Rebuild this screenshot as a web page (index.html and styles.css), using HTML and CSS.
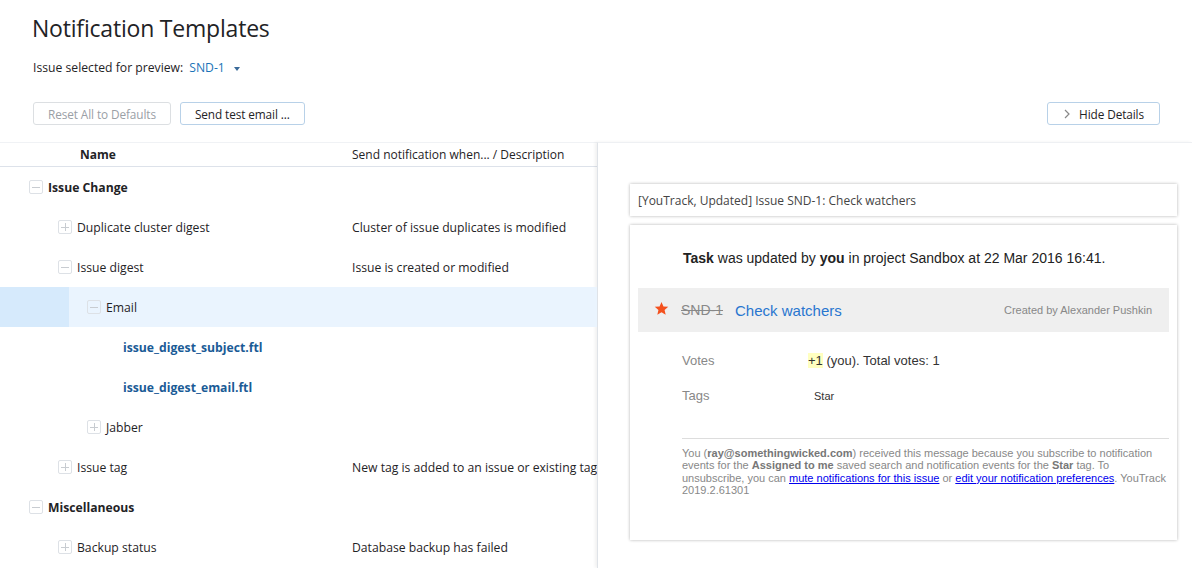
FILE: index.html
```html
<!DOCTYPE html>
<html>
<head>
<meta charset="utf-8">
<link rel="stylesheet" href="styles.css">
</head>
<body>
<div class="page">
  <h1 class="title">Notification Templates</h1>
  <div class="preview">Issue selected for preview: <span class="issue-link">SND-1</span><span class="caret"></span></div>
  <div class="toolbar">
    <div class="btns">
      <button class="btn disabled">Reset All to Defaults</button>
      <button class="btn">Send test email ...</button>
    </div>
    <button class="btn hide-btn"><svg width="8" height="10" viewBox="0 0 8 10"><path d="M2 1l4 4-4 4" fill="none" stroke="#888" stroke-width="1.2"/></svg>Hide Details</button>
  </div>
  <div class="main">
    <div class="tree">
      <div class="thead">
        <div class="col-name">Name</div>
        <div class="col-desc">Send notification when... / Description</div>
      </div>
      <div class="row l0"><span class="tg minus"></span><span class="name bold">Issue Change</span><span class="desc"></span></div>
      <div class="row l1"><span class="tg plus"></span><span class="name">Duplicate cluster digest</span><span class="desc">Cluster of issue duplicates is modified</span></div>
      <div class="row l1"><span class="tg minus"></span><span class="name">Issue digest</span><span class="desc">Issue is created or modified</span></div>
      <div class="row l2 selected"><span class="tg minus"></span><span class="name">Email</span><span class="desc"></span></div>
      <div class="row l3"><span class="name file">issue_digest_subject.ftl</span><span class="desc"></span></div>
      <div class="row l3"><span class="name file">issue_digest_email.ftl</span><span class="desc"></span></div>
      <div class="row l2"><span class="tg plus"></span><span class="name">Jabber</span><span class="desc"></span></div>
      <div class="row l1"><span class="tg plus"></span><span class="name">Issue tag</span><span class="desc">New tag is added to an issue or existing tag is removed</span></div>
      <div class="row l0"><span class="tg minus"></span><span class="name bold">Miscellaneous</span><span class="desc"></span></div>
      <div class="row l1"><span class="tg plus"></span><span class="name">Backup status</span><span class="desc">Database backup has failed</span></div>
    </div>
    <div class="details">
      <div class="subject">[YouTrack, Updated] Issue SND-1: Check watchers</div>
      <div class="mail">
        <p class="lead"><b>Task</b> was updated by <b>you</b> in project Sandbox at 22 Mar 2016 16:41.</p>
        <div class="issue-box">
          <svg class="star" width="15" height="15" viewBox="0 0 24 24"><path d="M12 1.5l3.1 7.1 7.7.6-5.9 5.1 1.8 7.6L12 17.8l-6.7 4.1 1.8-7.6L1.2 9.2l7.7-.6z" fill="#f4511e"/></svg>
          <span class="sid">SND-1</span>
          <span class="summary">Check watchers</span>
          <span class="created">Created by Alexander Pushkin</span>
        </div>
        <div class="field"><span class="fname">Votes</span><span class="fval"><span class="hl">+1</span> (you). Total votes: 1</span></div>
        <div class="field"><span class="fname">Tags</span><span class="fval small">Star</span></div>
        <div class="footer">You (<b>ray@somethingwicked.com</b>) received this message because you subscribe to notification events for the <b>Assigned to me</b> saved search and notification events for the <b>Star</b> tag. To unsubscribe, you can <a href="#">mute notifications for this issue</a> or <a href="#">edit your notification preferences</a>. YouTrack 2019.2.61301</div>
      </div>
    </div>
  </div>
</div>
</body>
</html>
```
FILE: styles.css
```css
* { box-sizing: border-box; }
html, body { margin: 0; padding: 0; background: #fff; }
body { font-family: "Open Sans", "Noto Sans", sans-serif; color: #1f2326; overflow: hidden; width: 1192px; height: 568px; }
.page { display: flex; flex-direction: column; height: 568px; }
.title { margin: 13px 0 0 32px; font-size: 23px; font-weight: 400; line-height: 30px; letter-spacing: -0.2px; color: #1f2326; }
.preview { margin: 16px 0 0 33px; font-size: 12.2px; line-height: 18px; color: #1f2326; display: flex; align-items: center; }
.issue-link { color: #1a73b8; margin-left: 6px; }
.caret { width: 0; height: 0; border-left: 3px solid transparent; border-right: 3px solid transparent; border-top: 4px solid #3a6a99; margin-left: 9px; margin-top: 1px; }
.toolbar { display: flex; justify-content: space-between; margin: 25px 32px 0 33px; }
.btns { display: flex; gap: 9px; }
.btn { height: 23px; padding: 0 14px; background: #fff; border: 1px solid #b8d1e8; border-radius: 3px; font-family: inherit; font-size: 11.8px; letter-spacing: -0.1px; color: #1f2326; display: flex; align-items: center; }
.btn.disabled { border-color: #dcdfe2; color: #9aa0a6; }
.hide-btn { padding: 0 15px 0 15px; gap: 8px; }
.main { display: flex; flex: 1; margin-top: 17px; min-height: 0; }
.tree { width: 597px; flex: none; overflow: hidden; border-top: 1px solid #f0f2f5; }
.thead { display: flex; height: 24px; align-items: center; border-bottom: 1px solid #dde2ea; font-size: 12px; }
.col-name { width: 352px; padding-left: 80px; font-weight: 700; }
.col-desc { white-space: nowrap; }
.row { display: flex; align-items: center; height: 40px; font-size: 12.2px; white-space: nowrap; position: relative; }
.row .name { display: flex; align-items: center; flex: 1 0 0; min-width: 0; }
.tg { width: 14px; height: 14px; border: 1px solid #dde1e6; border-radius: 2px; position: relative; flex: none; margin-right: 5px; }
.tg::before { content: ""; position: absolute; left: 2px; right: 2px; top: 5.5px; height: 1px; background: #c8ccd1; }
.tg.plus::after { content: ""; position: absolute; top: 2px; bottom: 2px; left: 5.5px; width: 1px; background: #c8ccd1; }
.l0 { padding-left: 29px; }
.l1 { padding-left: 58px; }
.l2 { padding-left: 87px; }
.l3 { padding-left: 123px; }
.name.bold { font-weight: 700; }
.name.file { font-weight: 700; color: #1a5b96; }
.desc { position: absolute; left: 352px; }
.selected { background: linear-gradient(to right, #d6eafc 0, #d6eafc 69px, #eaf4fe 69px); }
.details { flex: 1; border-left: 1px solid #dfe3e8; border-top: 1px solid #eef0f3; box-shadow: -2px 0 3px rgba(0,0,0,0.06); padding: 41px 15px 0 32px; font-family: "Liberation Sans", Arial, sans-serif; }
.subject { height: 32px; background: #fff; box-shadow: 0 0 3px rgba(0,0,0,0.3); font-size: 12px; color: #444; padding: 0 8px; display: flex; align-items: center; font-family: "Open Sans", "Noto Sans", sans-serif; }
.mail { margin-top: 9px; height: 315px; background: #fff; box-shadow: 0 0 3px rgba(0,0,0,0.3); padding: 24px 8px 0 8px; }
.lead { margin: 0 0 0 45px; font-size: 14px; color: #222; line-height: 18px; }
.issue-box { margin-top: 21px; height: 44px; background: #efefef; display: flex; align-items: center; padding: 0 17px 0 16px; }
.star { margin-right: 12px; margin-top: -3px; }
.sid { font-size: 14px; color: #888; text-decoration: line-through; margin-right: 12px; }
.summary { font-size: 15px; color: #2876cf; }
.created { margin-left: auto; font-size: 11px; color: #888; }
.field { display: flex; align-items: center; margin-left: 44px; height: 35px; }
.issue-box + .field { margin-top: 11px; }
.fname { width: 126px; font-size: 13px; color: #888; }
.fval { font-size: 13px; color: #333; }
.fval.small { font-size: 11px; margin-left: 6px; }
.hl { background: #ffffc0; }
.footer { margin: 25px 0 0 44px; padding-top: 8px; border-top: 1px solid #ddd; font-size: 11px; line-height: 12.4px; color: #888; }
.footer b { color: #777; }
.footer a { color: #0000ee; }
```
